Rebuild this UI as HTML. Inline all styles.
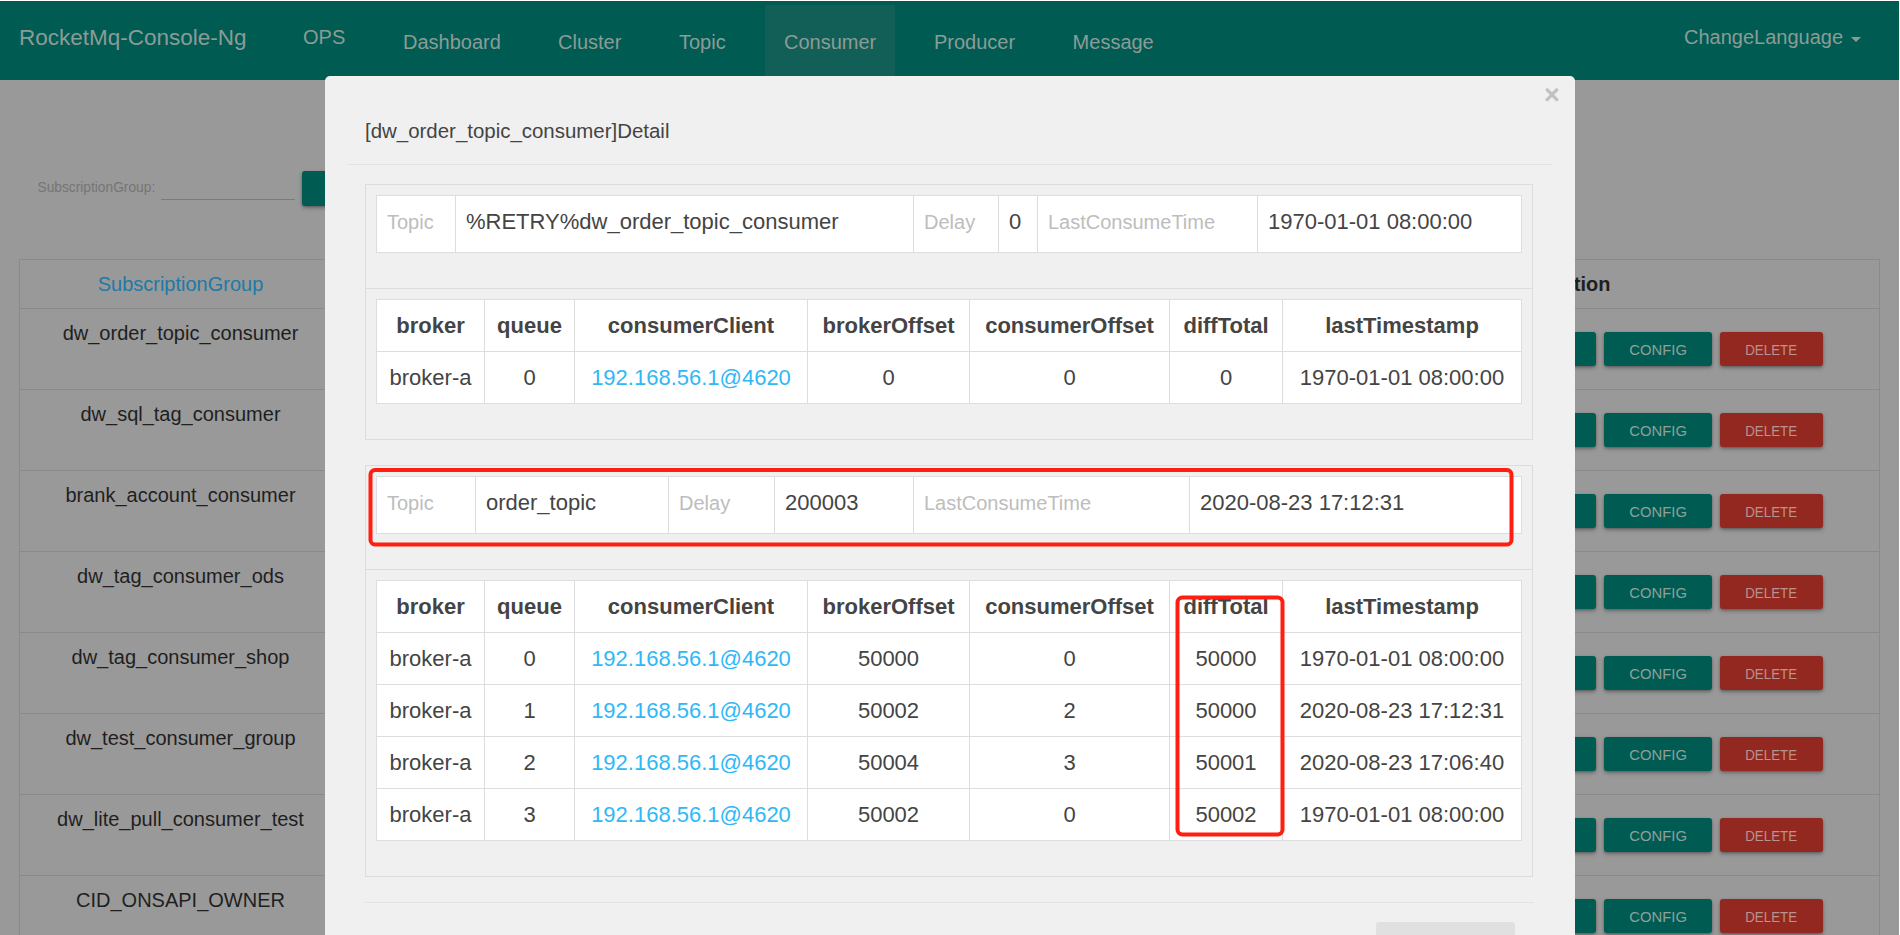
<!DOCTYPE html>
<html lang="en">
<head>
<meta charset="utf-8">
<title>RocketMq-Console-Ng</title>
<style>
html,body{margin:0;padding:0;}
body{width:1900px;height:935px;overflow:hidden;background:#fff;font-family:"Liberation Sans",sans-serif;position:relative;}
#stage{position:absolute;left:0;top:1px;width:1899px;height:934px;overflow:hidden;background:#999;}
.abs{position:absolute;white-space:nowrap;line-height:normal;}

/* ---------- navbar (dimmed by backdrop) ---------- */
#nav{position:absolute;left:0;top:0;width:1899px;height:79px;background:#005b52;}
#nav .t{position:absolute;white-space:nowrap;line-height:normal;color:#8c9b96;font-size:20px;}
#nav .active{position:absolute;left:765px;top:4px;width:130px;height:75px;background:#125f57;}
#nav .caret{position:absolute;left:1851px;top:36px;width:0;height:0;border-left:5px solid transparent;border-right:5px solid transparent;border-top:5px solid #8c9b96;}

/* ---------- search row ---------- */
#search .lbl{left:37.5px;top:179px;font-size:13.75px;color:#757575;}
#search .line{position:absolute;left:161px;top:198px;width:134px;height:1px;background:#7b7b7b;}
.btn{position:absolute;height:34px;border-radius:3px;box-shadow:0 2px 4px rgba(0,0,0,.28),0 1px 2px rgba(0,0,0,.18);color:#8fa09a;font-size:15.5px;line-height:36px;text-align:center;white-space:nowrap;}
.btn.teal{background:#005b52;}
.btn.red{background:#92281f;color:#b9938e;}
.btn span{display:inline-block;transform-origin:50% 50%;}
.btn .cfg{transform:scaleX(.955);}
.btn .del{transform:scaleX(.86);}

/* ---------- background table ---------- */
#bgtable{position:absolute;left:19px;top:258px;width:1861px;height:700px;border:1px solid #8a8a8a;box-sizing:border-box;}
#bgtable .hl{position:absolute;left:0;width:1859px;height:1px;background:#8a8a8a;}
#bgtable .name{position:absolute;left:0;width:321px;text-align:center;font-size:20px;color:#1f1f1f;white-space:nowrap;line-height:normal;}
#bgtable .head{color:#2079a7;}
#bgtable .op{position:absolute;left:1496px;font-size:20px;font-weight:bold;color:#1f1f1f;white-space:nowrap;line-height:normal;}

/* ---------- modal ---------- */
#modal{position:absolute;left:325px;top:75px;width:1250px;height:900px;background:#f0f0f0;border-radius:5px;color:#444;}
#modal .close{position:absolute;left:1215px;top:4px;width:24px;text-align:center;font-size:27px;font-weight:bold;line-height:normal;color:#c0c0c0;}
#modal .title{position:absolute;left:40px;top:43px;font-size:20.45px;line-height:normal;white-space:nowrap;color:#444;}
#modal .hline{position:absolute;left:22px;top:88px;width:1206px;height:1px;background:#e4e4e4;}
#modal .fline{position:absolute;left:40px;top:826px;width:1169px;height:1px;background:#e4e4e4;}
#modal .closebtn{position:absolute;left:1051px;top:846px;width:139px;height:50px;border-radius:3px;background:#e0e0e0;color:#666;font-size:15px;line-height:50px;text-align:center;}
#modal .anno{position:absolute;left:0;top:0;pointer-events:none;}
.panel{position:absolute;left:40px;width:1168px;box-sizing:border-box;border:1px solid #dcdcdc;background:#f0f0f0;}
.panel .ph{position:absolute;left:0;top:0;width:1166px;height:103px;border-bottom:1px solid #dcdcdc;}
.panel .pb{position:absolute;left:0;top:104px;width:1166px;}
.panel table{position:absolute;left:10px;top:10px;width:1146px;border-collapse:separate;border-spacing:0;table-layout:fixed;border-right:1px solid #ddd;border-bottom:1px solid #ddd;background:#fff;font-size:22px;color:#444;}
.panel td,.panel th{border-left:1px solid #ddd;border-top:1px solid #ddd;box-sizing:border-box;vertical-align:top;line-height:32px;white-space:nowrap;overflow:hidden;}
.ht td{height:57px;padding:10px 0 0 10px;text-align:left;}
.ht td.l{color:#bdbdbd;font-size:20px;}
.bt td,.bt th{height:52px;padding:10px 0 0 0;text-align:center;font-weight:normal;}
.bt th{font-weight:bold;}
.bt a{color:#30b8f6;text-decoration:none;}
</style>
</head>
<body>
<div id="stage">

<!-- NAVBAR -->
<div id="nav">
  <div class="active"></div>
  <div class="t" style="left:19px;top:24px;font-size:22.5px;">RocketMq-Console-Ng</div>
  <div class="t" style="left:303px;top:25px;">OPS</div>
  <div class="t" style="left:403px;top:30px;">Dashboard</div>
  <div class="t" style="left:558px;top:30px;">Cluster</div>
  <div class="t" style="left:679px;top:30px;">Topic</div>
  <div class="t" style="left:784px;top:30px;">Consumer</div>
  <div class="t" style="left:934px;top:30px;">Producer</div>
  <div class="t" style="left:1072.6px;top:30px;">Message</div>
  <div class="t" style="left:1684px;top:25px;">ChangeLanguage</div>
  <div class="caret"></div>
</div>

<!-- SEARCH -->
<div id="search">
  <div class="abs lbl">SubscriptionGroup:</div>
  <div class="line"></div>
  <div class="btn teal" style="left:302px;top:170px;width:120px;height:35px;line-height:35px;text-indent:30px;">SEARCH</div>
</div>

<!-- BACKGROUND TABLE -->
<div id="bgtable">
  <div class="name head" style="top:13px;">SubscriptionGroup</div>
  <div class="op" style="top:13px;">Operation</div>
  <div class="hl" style="top:48px;"></div>
  <!--ROWS-->
  <div class="name" style="top:62px;">dw_order_topic_consumer</div>
  <div class="btn teal" style="left:1273px;top:72px;width:95px;"><span class="cfg">CLIENT</span></div>
  <div class="btn teal" style="left:1376px;top:72px;width:200px;"><span class="cfg">CONSUME DETAIL</span></div>
  <div class="btn teal" style="left:1584px;top:72px;width:108px;"><span class="cfg">CONFIG</span></div>
  <div class="btn red" style="left:1700px;top:72px;width:103px;"><span class="del">DELETE</span></div>
  <div class="hl" style="top:129px;"></div>
  <div class="name" style="top:143px;">dw_sql_tag_consumer</div>
  <div class="btn teal" style="left:1273px;top:153px;width:95px;"><span class="cfg">CLIENT</span></div>
  <div class="btn teal" style="left:1376px;top:153px;width:200px;"><span class="cfg">CONSUME DETAIL</span></div>
  <div class="btn teal" style="left:1584px;top:153px;width:108px;"><span class="cfg">CONFIG</span></div>
  <div class="btn red" style="left:1700px;top:153px;width:103px;"><span class="del">DELETE</span></div>
  <div class="hl" style="top:210px;"></div>
  <div class="name" style="top:224px;">brank_account_consumer</div>
  <div class="btn teal" style="left:1273px;top:234px;width:95px;"><span class="cfg">CLIENT</span></div>
  <div class="btn teal" style="left:1376px;top:234px;width:200px;"><span class="cfg">CONSUME DETAIL</span></div>
  <div class="btn teal" style="left:1584px;top:234px;width:108px;"><span class="cfg">CONFIG</span></div>
  <div class="btn red" style="left:1700px;top:234px;width:103px;"><span class="del">DELETE</span></div>
  <div class="hl" style="top:291px;"></div>
  <div class="name" style="top:305px;">dw_tag_consumer_ods</div>
  <div class="btn teal" style="left:1273px;top:315px;width:95px;"><span class="cfg">CLIENT</span></div>
  <div class="btn teal" style="left:1376px;top:315px;width:200px;"><span class="cfg">CONSUME DETAIL</span></div>
  <div class="btn teal" style="left:1584px;top:315px;width:108px;"><span class="cfg">CONFIG</span></div>
  <div class="btn red" style="left:1700px;top:315px;width:103px;"><span class="del">DELETE</span></div>
  <div class="hl" style="top:372px;"></div>
  <div class="name" style="top:386px;">dw_tag_consumer_shop</div>
  <div class="btn teal" style="left:1273px;top:396px;width:95px;"><span class="cfg">CLIENT</span></div>
  <div class="btn teal" style="left:1376px;top:396px;width:200px;"><span class="cfg">CONSUME DETAIL</span></div>
  <div class="btn teal" style="left:1584px;top:396px;width:108px;"><span class="cfg">CONFIG</span></div>
  <div class="btn red" style="left:1700px;top:396px;width:103px;"><span class="del">DELETE</span></div>
  <div class="hl" style="top:453px;"></div>
  <div class="name" style="top:467px;">dw_test_consumer_group</div>
  <div class="btn teal" style="left:1273px;top:477px;width:95px;"><span class="cfg">CLIENT</span></div>
  <div class="btn teal" style="left:1376px;top:477px;width:200px;"><span class="cfg">CONSUME DETAIL</span></div>
  <div class="btn teal" style="left:1584px;top:477px;width:108px;"><span class="cfg">CONFIG</span></div>
  <div class="btn red" style="left:1700px;top:477px;width:103px;"><span class="del">DELETE</span></div>
  <div class="hl" style="top:534px;"></div>
  <div class="name" style="top:548px;">dw_lite_pull_consumer_test</div>
  <div class="btn teal" style="left:1273px;top:558px;width:95px;"><span class="cfg">CLIENT</span></div>
  <div class="btn teal" style="left:1376px;top:558px;width:200px;"><span class="cfg">CONSUME DETAIL</span></div>
  <div class="btn teal" style="left:1584px;top:558px;width:108px;"><span class="cfg">CONFIG</span></div>
  <div class="btn red" style="left:1700px;top:558px;width:103px;"><span class="del">DELETE</span></div>
  <div class="hl" style="top:615px;"></div>
  <div class="name" style="top:629px;">CID_ONSAPI_OWNER</div>
  <div class="btn teal" style="left:1273px;top:639px;width:95px;"><span class="cfg">CLIENT</span></div>
  <div class="btn teal" style="left:1376px;top:639px;width:200px;"><span class="cfg">CONSUME DETAIL</span></div>
  <div class="btn teal" style="left:1584px;top:639px;width:108px;"><span class="cfg">CONFIG</span></div>
  <div class="btn red" style="left:1700px;top:639px;width:103px;"><span class="del">DELETE</span></div>
  <div class="hl" style="top:696px;"></div>
  <!--/ROWS-->
</div>

<!--MODAL-->
<div id="modal">
  <div class="close">&times;</div>
  <div class="title">[dw_order_topic_consumer]Detail</div>
  <div class="hline"></div>

  <div class="panel" style="top:108px;height:256px;">
    <div class="ph"><table class="ht"><colgroup><col style="width:79px"><col style="width:458px"><col style="width:85px"><col style="width:39px"><col style="width:220px"><col style="width:264px"></colgroup><tbody><tr><td class="l">Topic</td><td class="v">%RETRY%dw_order_topic_consumer</td><td class="l">Delay</td><td class="v">0</td><td class="l">LastConsumeTime</td><td class="v">1970-01-01 08:00:00</td></tr></tbody></table></div>
    <div class="pb"><table class="bt"><colgroup><col style="width:108px"><col style="width:90px"><col style="width:233px"><col style="width:162px"><col style="width:200px"><col style="width:113px"><col style="width:239px"></colgroup>
      <thead><tr><th>broker</th><th>queue</th><th>consumerClient</th><th>brokerOffset</th><th>consumerOffset</th><th>diffTotal</th><th>lastTimestamp</th></tr></thead>
      <tbody>
      <tr><td>broker-a</td><td>0</td><td><a>192.168.56.1@4620</a></td><td>0</td><td>0</td><td>0</td><td>1970-01-01 08:00:00</td></tr>
      </tbody></table></div>
  </div>

  <div class="panel" style="top:389px;height:412px;">
    <div class="ph"><table class="ht"><colgroup><col style="width:99px"><col style="width:193px"><col style="width:106px"><col style="width:139px"><col style="width:276px"><col style="width:332px"></colgroup><tbody><tr><td class="l">Topic</td><td class="v">order_topic</td><td class="l">Delay</td><td class="v">200003</td><td class="l">LastConsumeTime</td><td class="v">2020-08-23 17:12:31</td></tr></tbody></table></div>
    <div class="pb"><table class="bt"><colgroup><col style="width:108px"><col style="width:90px"><col style="width:233px"><col style="width:162px"><col style="width:200px"><col style="width:113px"><col style="width:239px"></colgroup>
      <thead><tr><th>broker</th><th>queue</th><th>consumerClient</th><th>brokerOffset</th><th>consumerOffset</th><th>diffTotal</th><th>lastTimestamp</th></tr></thead>
      <tbody>
      <tr><td>broker-a</td><td>0</td><td><a>192.168.56.1@4620</a></td><td>50000</td><td>0</td><td>50000</td><td>1970-01-01 08:00:00</td></tr>
      <tr><td>broker-a</td><td>1</td><td><a>192.168.56.1@4620</a></td><td>50002</td><td>2</td><td>50000</td><td>2020-08-23 17:12:31</td></tr>
      <tr><td>broker-a</td><td>2</td><td><a>192.168.56.1@4620</a></td><td>50004</td><td>3</td><td>50001</td><td>2020-08-23 17:06:40</td></tr>
      <tr><td>broker-a</td><td>3</td><td><a>192.168.56.1@4620</a></td><td>50002</td><td>0</td><td>50002</td><td>1970-01-01 08:00:00</td></tr>
      </tbody></table></div>
  </div>

  <div class="fline"></div>
  <div class="closebtn">CLOSE</div>

  <!-- red annotation rectangles (drawn on the screenshot) -->
  <svg class="anno" width="1250" height="860" viewBox="0 0 1250 860">
    <rect x="45.5" y="394" width="1141" height="74.5" rx="4.5" ry="4.5" fill="none" stroke="#ff1e10" stroke-width="4"/>
    <rect x="852.5" y="521.5" width="105" height="237" rx="5" ry="5" fill="none" stroke="#ff1e10" stroke-width="4"/>
  </svg>
</div>
<!--/MODAL-->

</div>
</body>
</html>
